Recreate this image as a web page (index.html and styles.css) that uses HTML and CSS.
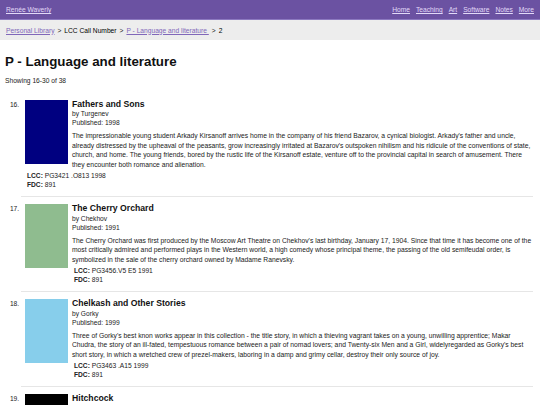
FILE: index.html
```html
<!DOCTYPE html>
<html lang="en">
<head>
    <meta charset="UTF-8">
    <meta name="viewport" content="width=device-width, initial-scale=1.0">
    <title>P - Language and literature | Renée Waverly</title>
    <link rel="stylesheet" href="styles.css">
</head>
<body>
    <header class="site-header">
        <a href="#" class="site-name">Renée Waverly</a>
        <nav class="site-nav">
            <a href="#">Home</a>
            <a href="#">Teaching</a>
            <a href="#">Art</a>
            <a href="#">Software</a>
            <a href="#">Notes</a>
            <a href="#">More</a>
        </nav>
    </header>
    <div class="crumbs">
        <a href="#">Personal Library</a>
        <span class="sep">&gt;</span>
        <span class="crumb-here">LCC Call Number</span>
        <span class="sep">&gt;</span>
        <a href="#">P - Language and literature&nbsp;</a>
        <span class="sep">&gt;</span>
        <span class="crumb-here">2</span>
    </div>
    <main class="container">
        <h1>P - Language and literature</h1>
        <p class="count">Showing 16-30 of 38</p>
        <ol class="books" start="16">
            <li class="book">
                <div class="cover" style="background-color: #000080;"></div>
                <h2 class="book-title">Fathers and Sons</h2>
                <div class="byline">by Turgenev</div>
                <div class="byline">Published: 1998</div>
                <p class="desc">The impressionable young student Arkady Kirsanoff arrives home in the company of his friend Bazarov, a cynical biologist. Arkady's father and uncle, already distressed by the upheaval of the peasants, grow increasingly irritated at Bazarov's outspoken nihilism and his ridicule of the conventions of state, church, and home. The young friends, bored by the rustic life of the Kirsanoff estate, venture off to the provincial capital in search of amusement. There they encounter both romance and alienation.</p>
                <div class="meta">
                    <div><b>LCC:</b> PG3421 .O813 1998</div>
                    <div><b>FDC:</b> 891</div>
                </div>
            </li>
            <li class="book">
                <div class="cover" style="background-color: #8fbc8f;"></div>
                <h2 class="book-title">The Cherry Orchard</h2>
                <div class="byline">by Chekhov</div>
                <div class="byline">Published: 1991</div>
                <p class="desc">The Cherry Orchard was first produced by the Moscow Art Theatre on Chekhov's last birthday, January 17, 1904. Since that time it has become one of the most critically admired and performed plays in the Western world, a high comedy whose principal theme, the passing of the old semifeudal order, is symbolized in the sale of the cherry orchard owned by Madame Ranevsky.</p>
                <div class="meta">
                    <div><b>LCC:</b> PG3456.V5 E5 1991</div>
                    <div><b>FDC:</b> 891</div>
                </div>
            </li>
            <li class="book">
                <div class="cover" style="background-color: #87ceeb;"></div>
                <h2 class="book-title">Chelkash and Other Stories</h2>
                <div class="byline">by Gorky</div>
                <div class="byline">Published: 1999</div>
                <p class="desc">Three of Gorky's best knon works appear in this collection - the title story, in which a thieving vagrant takes on a young, unwilling apprentice; Makar Chudra, the story of an ill-fated, tempestuous romance between a pair of nomad lovers; and Twenty-six Men and a Girl, widelyregarded as Gorky's best short story, in which a wretched crew of prezel-makers, laboring in a damp and grimy cellar, destroy their only source of joy.</p>
                <div class="meta">
                    <div><b>LCC:</b> PG3463 .A15 1999</div>
                    <div><b>FDC:</b> 891</div>
                </div>
            </li>
            <li class="book">
                <div class="cover" style="background-color: #000000;"></div>
                <h2 class="book-title">Hitchcock</h2>
                <div class="byline">by Truffaut</div>
                <div class="byline">Published: 1985</div>
                <p class="desc">Based on more than fifty hours of interviews, this is a film-by-film conversation between two great directors about the art and craft of making movies.</p>
                <div class="meta">
                    <div><b>LCC:</b> PN1998.A3 H5 1985</div>
                    <div><b>FDC:</b> 791</div>
                </div>
            </li>
        </ol>
    </main>
</body>
</html>
```

FILE: styles.css
```css
body {
    margin: 0;
    font-family: "Liberation Sans", Arial, sans-serif;
    font-size: 6.67px;
    color: #222;
}
.site-header {
    background-color: #6b52a2;
    height: 19px;
    border-bottom: 1px solid #8c79c0;
    padding: 0 6px;
    display: flex;
    align-items: center;
    justify-content: space-between;
}
.site-header a {
    color: #e2d9f8;
}
.site-nav {
    display: flex;
    gap: 6px;
}
.crumbs {
    background-color: #ededed;
    height: 20px;
    padding: 0 6px;
    display: flex;
    align-items: center;
    gap: 3px;
}
.crumbs a {
    color: #8067b9;
}
.crumb-here {
    color: #000;
}
.container {
    padding: 0 7px 0 5px;
}
h1 {
    font-size: 13.33px;
    line-height: 15.3px;
    margin: 14.4px 0 0;
    color: #111;
}
.count {
    margin: 6.6px 0 0;
    line-height: 9.3px;
}
.books {
    margin: 6px 0 0;
    padding-left: 16px;
}
.book {
    padding: 7.5px 0 6px 4px;
    border-bottom: 1px solid #e6e6e6;
}
.book:first-child {
    padding-top: 8px;
}
.book::after {
    content: "";
    display: table;
    clear: both;
}
.cover {
    float: left;
    width: 42.67px;
    height: 64px;
    margin: 0 4.33px 4px 0;
}
.book-title {
    font-size: 8.67px;
    line-height: 9.5px;
    margin: 0;
    color: #111;
}
.byline {
    line-height: 9px;
}
.desc {
    margin: 4px 0 0;
    font-size: 6.75px;
    line-height: 9.5px;
}
/* call numbers sit in their own box, so they stay beside a tall cover */
.meta {
    display: flow-root;
    padding: 1.5px 0 0 2px;
    line-height: 9.5px;
}
```
